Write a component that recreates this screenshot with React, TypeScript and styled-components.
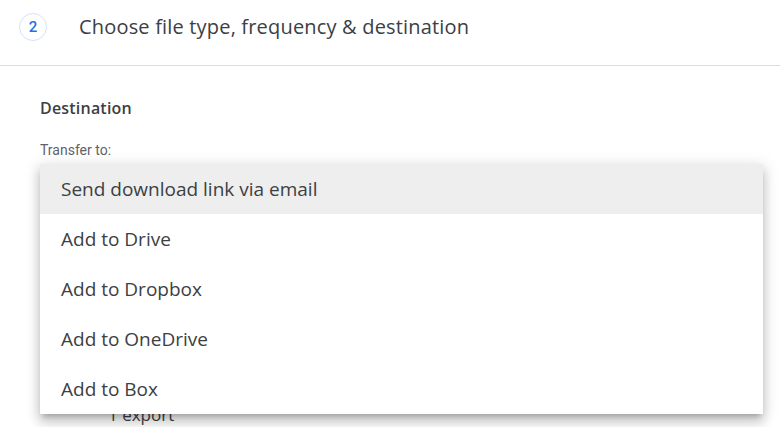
import React from 'react'
import styled, { createGlobalStyle } from 'styled-components'

const GlobalStyle = createGlobalStyle`
  html, body {
    margin: 0;
    padding: 0;
    background: #fff;
  }
  body {
    font-family: "Open Sans", Roboto, Arial, sans-serif;
    color: #3c4043;
    overflow: hidden;
  }
`

const Page = styled.div`
  width: 780px;
  height: 427px;
  overflow: hidden;
  position: relative;
`

const StepHeader = styled.div`
  display: flex;
  align-items: center;
  height: 66px;
  box-sizing: border-box;
  padding: 0 0 12px 19px;
  border-bottom: 1px solid #dadce0;
`

const StepBadge = styled.div`
  width: 28px;
  height: 28px;
  box-sizing: border-box;
  border: 1px solid #d2e3fc;
  border-radius: 50%;
  display: flex;
  align-items: center;
  justify-content: center;
  color: #1a73e8;
  font-family: Roboto, Arial, sans-serif;
  font-size: 15px;
  font-weight: 500;
`

const StepTitle = styled.h2`
  margin: 0 0 0 32px;
  font-size: 20px;
  font-weight: 500;
  letter-spacing: 0.18px;
  color: #3c4043;
`

const Body = styled.div`
  padding: 32px 0 0 40px;
`

const SectionTitle = styled.h3`
  margin: 0;
  font-size: 16px;
  font-weight: 600;
  line-height: 20px;
  letter-spacing: 0.2px;
  color: #3c4043;
`

const FieldLabel = styled.div`
  margin-top: 23px;
  font-family: Roboto, Arial, sans-serif;
  font-size: 14px;
  line-height: 18px;
  color: #5f6368;
`

const SelectBox = styled.div`
  position: relative;
  margin-top: 5px;
  width: 722px;
  height: 56px;
  box-sizing: border-box;
  border: 1px solid #dadce0;
  border-radius: 4px;
`

const Menu = styled.ul`
  position: absolute;
  top: -1px;
  left: -1px;
  width: 723px;
  margin: 0;
  padding: 0;
  list-style: none;
  background: #fff;
  z-index: 2;
  box-shadow: 0 5px 5px -3px rgba(0, 0, 0, 0.2), 0 8px 10px 1px rgba(0, 0, 0, 0.14),
    0 3px 14px 2px rgba(0, 0, 0, 0.12);
`

const MenuItem = styled.li<{ $active?: boolean }>`
  height: 50px;
  display: flex;
  align-items: center;
  padding-left: 21px;
  font-size: 19px;
  color: #3c4043;
  background: ${p => (p.$active ? '#eeeeee' : '#fff')};
`

const ExportCount = styled.div`
  margin: 185px 0 0 68px;
  font-size: 17px;
  line-height: 20px;
  color: #3c4043;
`

const options = [
  'Send download link via email',
  'Add to Drive',
  'Add to Dropbox',
  'Add to OneDrive',
  'Add to Box',
]

const App = () => (
  <Page>
    <GlobalStyle />
    <StepHeader>
      <StepBadge>2</StepBadge>
      <StepTitle>Choose file type, frequency &amp; destination</StepTitle>
    </StepHeader>
    <Body>
      <SectionTitle>Destination</SectionTitle>
      <FieldLabel>Transfer to:</FieldLabel>
      <SelectBox>
        <Menu>
          {options.map((o, i) => (
            <MenuItem key={o} $active={i === 0}>{o}</MenuItem>
          ))}
        </Menu>
      </SelectBox>
      <ExportCount>1 export</ExportCount>
    </Body>
  </Page>
)

export default App
